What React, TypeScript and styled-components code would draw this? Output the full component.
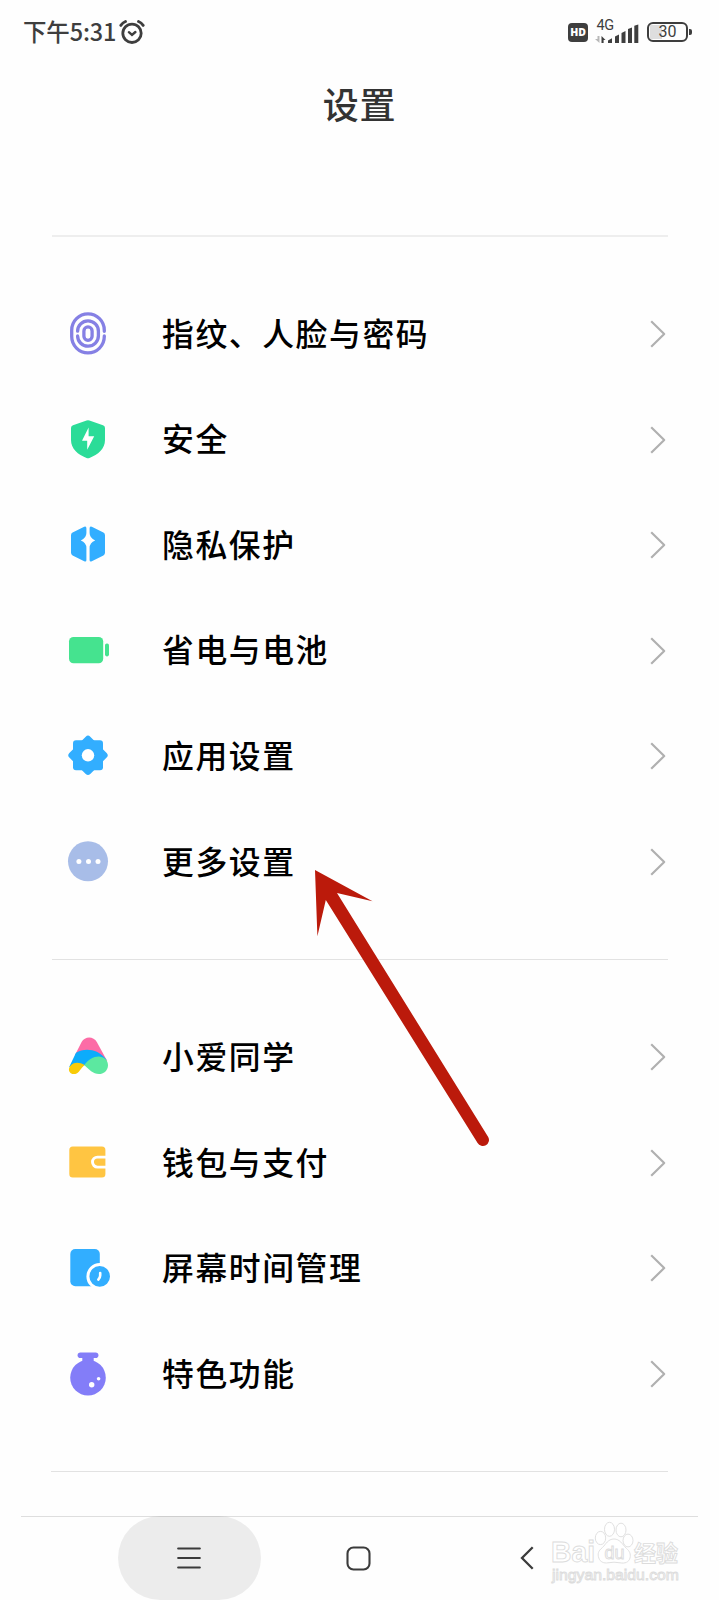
import React from "react";
import styled, { createGlobalStyle } from "styled-components";

const GlobalStyle = createGlobalStyle`
  * { box-sizing: border-box; }
  body { margin: 0; background: #fefefe; }
`;

const Screen = styled.div`
  position: relative;
  display: flex;
  flex-direction: column;
  width: 719px;
  height: 1600px;
  overflow: hidden;
  background: #fefefe;
  color: #000;
  font-family: "Noto Sans CJK SC", sans-serif;
`;

const StatusBar = styled.header`
  display: flex;
  justify-content: space-between;
  align-items: center;
  height: 64px;
  padding: 0 27px 0 23px;
  color: #3e3e3e;
`;

const StatusGroup = styled.div`
  display: flex;
  align-items: center;
`;

const Clock = styled.span`
  margin-top: -2px;
  font-size: 23.5px;
  font-weight: 500;
  line-height: 30px;
  letter-spacing: -0.15px;
`;

const AlarmSvg = styled.svg`
  display: block;
  margin: 0 0 0 2.5px;
`;

const HdBadge = styled.span`
  display: flex;
  align-items: center;
  justify-content: center;
  width: 20px;
  height: 19px;
  border-radius: 4px;
  background: #3e3e3e;
  color: #fff;
  font: 800 10.5px/19px "Open Sans", sans-serif;
`;

const Signal = styled.div`
  display: flex;
  flex-direction: column;
  width: 45px;
  height: 23px;
  margin: 0 8px 0 6px;
`;

const Network = styled.span`
  height: 3px;
  padding-left: 2.5px;
  font: 400 14.5px/10px Roboto, sans-serif;
  letter-spacing: -0.5px;
`;

const BatteryShell = styled.div`
  display: flex;
  align-items: center;
  justify-content: center;
  width: 41px;
  height: 20px;
  border: 2px solid #3e3e3e;
  border-radius: 6px;
  background: linear-gradient(to right, #dedede 12px, transparent 12px) 1px 1px / 35px 14px no-repeat;
  font: 400 16px/16px Roboto, sans-serif;
`;

const BatteryTip = styled.i`
  width: 3px;
  height: 6px;
  margin-left: 1px;
  border-radius: 0 2px 2px 0;
  background: #3e3e3e;
`;

const Title = styled.h1`
  height: 171px;
  margin: 0;
  padding-top: 12.5px;
  color: #333;
  font-size: 36px;
  font-weight: 500;
  line-height: 52px;
  letter-spacing: 0.8px;
  text-align: center;
`;

const Section = styled.section<{ $soft?: boolean }>`
  margin: 0 51px 0 51.5px;
  padding: ${(p) => (p.$soft ? "44.2px" : "44.9px")} 0 43.8px;
  border-top: ${(p) => (p.$soft ? "2px solid #eeeeee" : "1px solid #e2e2e2")};
`;

const Row = styled.div`
  display: flex;
  align-items: center;
  height: 105.6px;
  padding: 0 2px 0 14.5px;
`;

const RowIcon = styled.svg`
  flex: none;
  width: 44px;
  height: 44px;
`;

const Label = styled.span`
  flex: 1;
  margin: -4.6px 0 0 52px;
  font-size: 31.8px;
  font-weight: 500;
  line-height: 44px;
  letter-spacing: 1.6px;
`;

const NavWrap = styled.footer`
  flex: 1;
  margin: 0 21px;
  border-top: 1px solid #dedede;
`;

const EndRule = styled.div`
  height: 45px;
  margin: 0 51px;
  border-top: 1px solid #e2e2e2;
`;

const Nav = styled.nav`
  display: grid;
  grid-template-columns: 143px 143px 143px;
  column-gap: 26px;
  height: 84px;
  margin: -1px 0 0 97px;
`;

const NavButton = styled.div<{ $active?: boolean }>`
  display: flex;
  align-items: center;
  justify-content: center;
  padding: 1px 1px 0 0;
  border-radius: 42px;
  background: ${(p) => (p.$active ? "rgba(0, 0, 0, 0.07)" : "transparent")};
`;

const ArrowOverlay = styled.svg`
  position: absolute;
  left: 305px;
  top: 860px;
`;

const Watermark = styled.div`
  position: absolute;
  left: 551px;
  top: 1518px;
  width: 140px;
  color: #fff;
`;

const MarkSvg = styled.svg`
  display: block;
  overflow: visible;
`;

const MarkText = styled.text<{ $size: number; $light?: boolean }>`
  font: ${(p) => (p.$light ? 400 : 700)} ${(p) => p.$size}px "Liberation Sans", "Noto Sans CJK SC", sans-serif;
  fill: #fff;
  stroke: #dcdcdc;
  stroke-width: 0.9px;
`;

const Chevron = () => (
  <svg width="16" height="28" viewBox="0 0 16 28" fill="none" stroke="#b0b0b0" strokeWidth="2.2">
    <path d="M1.2 1.2 14.2 14 1.2 26.8" strokeLinejoin="round" />
  </svg>
);

const icons: Record<string, React.ReactNode> = {
  fingerprint: (
    <g fill="none" stroke="#8580e4" strokeWidth="3.3" strokeLinecap="round">
      <path d="M38.3 19.3V18.2A16.3 16.3 0 0 0 5.7 18.2V24.6A16.3 16.3 0 0 0 38.3 24.6V23.9" />
      <path d="M11.6 19.2A10.4 10.4 0 0 1 32.4 19.3V23.7A10.4 10.4 0 0 1 11.6 23.9" />
      <rect x="17.9" y="14.9" width="8.2" height="13.4" rx="4.1" />
    </g>
  ),
  shield: (
    <>
      <path
        d="M20.6 2.6Q22 2 23.4 2.6L37 7.2Q39 8 39 10V22C39 31 32 36.5 23.5 40Q22 40.6 20.5 40C12 36.5 5 31 5 22V10Q5 8 7 7.2Z"
        fill="#2bdc98"
      />
      <path d="M22.6 9.5 16 22.8H21.2V31.8L28.2 18.2H22.6Z" fill="#fff" />
    </>
  ),
  privacy: (
    <g fill="#32aeff">
      <path d="M18.2 3.8Q20.4 3 20.4 5.2V10Q20.4 15 14.8 17.4Q20.4 19.8 20.4 24.8V37Q20.4 39.3 18.2 38.3L6.6 32.4Q5 31.5 5 29.7V12.2Q5 10.4 6.6 9.5Z" />
      <path d="M25.8 3.8Q23.6 3 23.6 5.2V10Q23.6 15 29.2 17.4Q23.6 19.8 23.6 24.8V37Q23.6 39.3 25.8 38.3L37.4 32.4Q39 31.5 39 29.7V12.2Q39 10.4 37.4 9.5Z" />
    </g>
  ),
  battery: (
    <g fill="#45e38f">
      <rect x="3" y="8" width="34.2" height="26.2" rx="4.5" />
      <rect x="39" y="14.4" width="4" height="13" rx="1.8" />
    </g>
  ),
  gear: (
    <>
      <g fill="#32aeff">
        <rect x="7" y="6.3" width="30" height="30" rx="3" />
        <rect x="7.2" y="6.5" width="29.6" height="29.6" rx="3.2" transform="rotate(45 22 21.3)" />
      </g>
      <circle cx="22" cy="21.3" r="6.2" fill="#fff" />
    </>
  ),
  more: (
    <>
      <circle cx="22" cy="21.3" r="20" fill="#a8bde8" />
      <g fill="#fff">
        <circle cx="12.9" cy="21.6" r="2.5" />
        <circle cx="22.5" cy="21.6" r="2.5" />
        <circle cx="32" cy="21.6" r="2.5" />
      </g>
    </>
  ),
  assistant: (
    <>
      <path d="M15.6 7C18.8.9 27.6.9 30.8 7L41.2 26 9 20Z" fill="#fc6ca6" />
      <path d="M10 17.8C19 12.5 32 14 40.4 24.6L37 31 18.3 30.2 3.2 32Z" fill="#0cacfb" />
      <path d="M18.3 30C22 24.5 28 21.2 33 21.4C39.5 22 42.2 26 42 30.7C41.5 36 37.5 39 33 39C27 39 23 34.5 18.3 30Z" fill="#5ce8a0" />
      <path d="M18.5 30C14 27.3 8.5 26.8 5.2 30C2.4 32.7 2.3 36 4.5 37.9C7 39.8 10.6 39.4 12.8 36.8Q15 33.5 18.5 30Z" fill="#f8cb08" />
    </>
  ),
  wallet: (
    <>
      <rect x="3.3" y="5.6" width="36.1" height="31" rx="3.5" fill="#ffc542" />
      <path d="M41 16.1H31.5A5 5 0 0 0 31.5 26.1H41" fill="none" stroke="#fff" strokeWidth="2.9" />
    </>
  ),
  screenTime: (
    <>
      <rect x="4.3" y="3" width="29.5" height="37.2" rx="5" fill="#32aeff" />
      <circle cx="33.7" cy="30.4" r="11.8" fill="#32aeff" stroke="#fff" strokeWidth="3" />
      <path d="M34.2 27V29.5Q34.2 31.5 32.3 33.6" fill="none" stroke="#fff" strokeWidth="2.6" strokeLinecap="round" />
    </>
  ),
  flask: (
    <>
      <g fill="#837df8">
        <rect x="11.6" y=".4" width="20.8" height="5.6" rx="2.8" />
        <path d="M16.3 4H27.7V10H16.3Z" />
        <circle cx="22" cy="25.7" r="17.8" />
      </g>
      <circle cx="25.7" cy="32.7" r="2.7" fill="#fff" />
      <circle cx="32.6" cy="26.7" r="1.8" fill="#fff" />
    </>
  ),
};

const groups: [string, string][][] = [
  [
    ["fingerprint", "指纹、人脸与密码"],
    ["shield", "安全"],
    ["privacy", "隐私保护"],
    ["battery", "省电与电池"],
    ["gear", "应用设置"],
    ["more", "更多设置"],
  ],
  [
    ["assistant", "小爱同学"],
    ["wallet", "钱包与支付"],
    ["screenTime", "屏幕时间管理"],
    ["flask", "特色功能"],
  ],
];

export default function App() {
  return (
    <Screen>
      <GlobalStyle />
      <StatusBar>
        <StatusGroup>
          <Clock>下午5:31</Clock>
          <AlarmSvg width="26" height="25" viewBox="0 0 26 25" fill="none" stroke="#3e3e3e" strokeWidth="2.8" strokeLinecap="round">
            <circle cx="13" cy="13.3" r="9.2" />
            <path d="M1.8 5.4Q3.7 2.6 6.5 1.5M24.2 5.4Q22.3 2.6 19.5 1.5" />
            <path d="M9.9 12.2 13 15 16.4 12" strokeWidth="2.4" />
          </AlarmSvg>
        </StatusGroup>
        <StatusGroup>
          <HdBadge>HD</HdBadge>
          <Signal>
            <Network>4G</Network>
            <svg width="45" height="20" viewBox="0 0 45 20" fill="#3e3e3e">
              <path d="M14 19V16.5L18 14.2V19ZM21 19V12.5L25 10.5V19ZM27.5 19V9L31.5 7V19ZM34 19V5L38 3.5V19ZM40.3 19V1.8L44.3.5V19Z" />
              <path d="M7.5 19V12L11.5 16H9.6V19Z" />
              <path d="M5.5 12V19L1 15H3.5V12Z" fill="#b8b8b8" />
            </svg>
          </Signal>
          <BatteryShell>30</BatteryShell>
          <BatteryTip />
        </StatusGroup>
      </StatusBar>
      <Title>设置</Title>
      {groups.map((rows, i) => (
        <Section key={i} $soft={i === 0}>
          {rows.map(([icon, text]) => (
            <Row key={text}>
              <RowIcon viewBox="0 0 44 44">{icons[icon]}</RowIcon>
              <Label>{text}</Label>
              <Chevron />
            </Row>
          ))}
        </Section>
      ))}
      <EndRule />
      <NavWrap>
        <Nav>
          <NavButton $active>
            <svg width="24" height="22" viewBox="0 0 24 22" stroke="#3b3b3b" strokeWidth="2.2" strokeLinecap="round">
              <path d="M1.2 1.5H22.8M1.2 11H22.8M1.2 20.5H22.8" />
            </svg>
          </NavButton>
          <NavButton>
            <svg width="25" height="25" viewBox="0 0 25 25" fill="none" stroke="#3b3b3b" strokeWidth="2.1">
              <rect x="1.5" y="1.5" width="22" height="22" rx="6" />
            </svg>
          </NavButton>
          <NavButton>
            <svg width="14" height="24" viewBox="0 0 14 24" fill="none" stroke="#3b3b3b" strokeWidth="2.3">
              <path d="M12.7 1.2 2 12 12.7 22.8" />
            </svg>
          </NavButton>
        </Nav>
      </NavWrap>
      <ArrowOverlay width="200" height="300" viewBox="305 860 200 300">
        <path
          d="M315 870 372.5 901.3 337 893 488.2 1137A6 6 0 0 1 477.6 1143L325.8 900 317.4 936.3Z"
          fill="#bb1a0b"
        />
      </ArrowOverlay>
      <Watermark>
        <MarkSvg width="140" height="72" viewBox="0 0 140 72" fill="#fff" stroke="#dcdcdc" strokeWidth="0.9">
          <MarkText $size={29} x="0" y="44" textLength="44" lengthAdjust="spacingAndGlyphs">Bai</MarkText>
          <ellipse cx="49.5" cy="20" rx="5.2" ry="6.6" />
          <ellipse cx="58.5" cy="11.3" rx="5" ry="7" />
          <ellipse cx="70" cy="12" rx="5" ry="6.8" />
          <ellipse cx="77" cy="22.5" rx="5" ry="6.4" />
          <path d="M63 21C57 21 55 26 51.5 29.5C47 33 46.5 36 47.8 40C49 44 53 45.5 57 44.8Q63 43.6 69 44.8C74 45.8 78 44 79 40C80 36 78.5 33 75.5 30.5C71 26 69 21 63 21Z" />
          <MarkText $size={18} $light x="53.5" y="41">du</MarkText>
          <MarkText $size={22} x="83" y="43">经验</MarkText>
          <MarkText $size={15.5} $light x="1" y="62" textLength="127" lengthAdjust="spacingAndGlyphs">jingyan.baidu.com</MarkText>
        </MarkSvg>
      </Watermark>
    </Screen>
  );
}
